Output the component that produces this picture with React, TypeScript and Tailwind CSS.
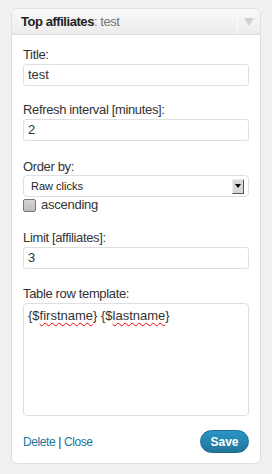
import React from "react";

const font = { fontFamily: '"Liberation Sans", Arial, sans-serif' };

function Field({ label, value }: { label: string; value: string }) {
  return (
    <div>
      <div className="text-[13px] leading-[17px] tracking-[-0.35px] text-[#333]">{label}</div>
      <div className="mt-[1px] h-[22px] rounded-[3px] border border-[#dfdfdf] bg-white px-[4px] text-[13px] leading-[20px] text-[#333]">
        {value}
      </div>
    </div>
  );
}

export default function App() {
  return (
    <div className="min-h-[474px] bg-[#f1f1f1] pt-[8px] pl-[11px]" style={font}>
      <div className="w-[250px] rounded-[6px] border border-[#dfdfdf] bg-white">
        {/* Header */}
        <div className="flex h-[26px] rounded-t-[6px] border-b border-[#dfdfdf] bg-gradient-to-b from-[#f9f9f9] to-[#ececec]">
          <div className="flex-1 pl-[9px] text-[13px] leading-[25px] tracking-[-0.45px]">
            <span className="font-bold text-[#222]">Top affiliates</span>
            <span className="text-[#777]">: test</span>
          </div>
          <div className="flex w-[23px] items-center justify-center border-l border-[#fafafa]">
            <svg width="10" height="8" viewBox="0 0 10 8">
              <path d="M0 0h10L5 8z" fill="#d1d1d1" />
            </svg>
          </div>
        </div>

        {/* Body */}
        <div className="px-[11px] pt-[11px] pb-[10px]">
          <Field label="Title:" value="test" />
          <div className="mt-[15px]">
            <Field label="Refresh interval [minutes]:" value="2" />
          </div>

          <div className="mt-[18px]">
            <div className="text-[13px] leading-[16px] tracking-[-0.35px] text-[#333]">Order by:</div>
            <div className="flex h-[22px] items-center justify-between rounded-[4px] border border-[#dfdfdf] bg-white pl-[7px] pr-[4px] text-[11px] text-[#222]">
              <span>Raw clicks</span>
              <div className="flex h-[15px] w-[12px] items-center justify-center border border-t-[#eee] border-l-[#eee] border-r-[#555] border-b-[#555] bg-[#d8d8d8]">
                <svg width="6" height="4" viewBox="0 0 6 4">
                  <path d="M0 0h6L3 4z" fill="#000" />
                </svg>
              </div>
            </div>
            <div className="flex items-center gap-[5px]">
              <div className="h-[13px] w-[13px] rounded-[2px] border border-[#777] bg-gradient-to-b from-[#d8d8d8] to-[#bdbdbd]" />
              <span className="text-[13px] leading-[16px] tracking-[-0.25px] text-[#333]">ascending</span>
            </div>
          </div>

          <div className="mt-[16px]">
            <Field label="Limit [affiliates]:" value="3" />
          </div>

          <div className="mt-[16px]">
            <div className="text-[13px] leading-[17px] tracking-[-0.35px] text-[#333]">Table row template:</div>
            <div className="mt-[1px] h-[113px] rounded-[4px] border border-[#dfdfdf] bg-white px-[4px] pt-[3px] text-[13px] leading-[18px] text-[#333]">
              {"{$"}
              <span className="underline decoration-wavy decoration-[#e00] decoration-1 underline-offset-2">firstname</span>
              {"} {$"}
              <span className="underline decoration-wavy decoration-[#e00] decoration-1 underline-offset-2">lastname</span>
              {"}"}
            </div>
          </div>

          <div className="mt-[14px] flex items-center justify-between">
            <div className="text-[12px] tracking-[-0.4px] text-[#333]">
              <span className="text-[#21759b]">Delete</span> | <span className="text-[#21759b]">Close</span>
            </div>
            <button className="h-[23px] w-[49px] rounded-full border border-[#1e6a8d] bg-gradient-to-b from-[#2a95c5] to-[#21759b] text-[12px] font-bold text-white">
              Save
            </button>
          </div>
        </div>
      </div>
    </div>
  );
}
